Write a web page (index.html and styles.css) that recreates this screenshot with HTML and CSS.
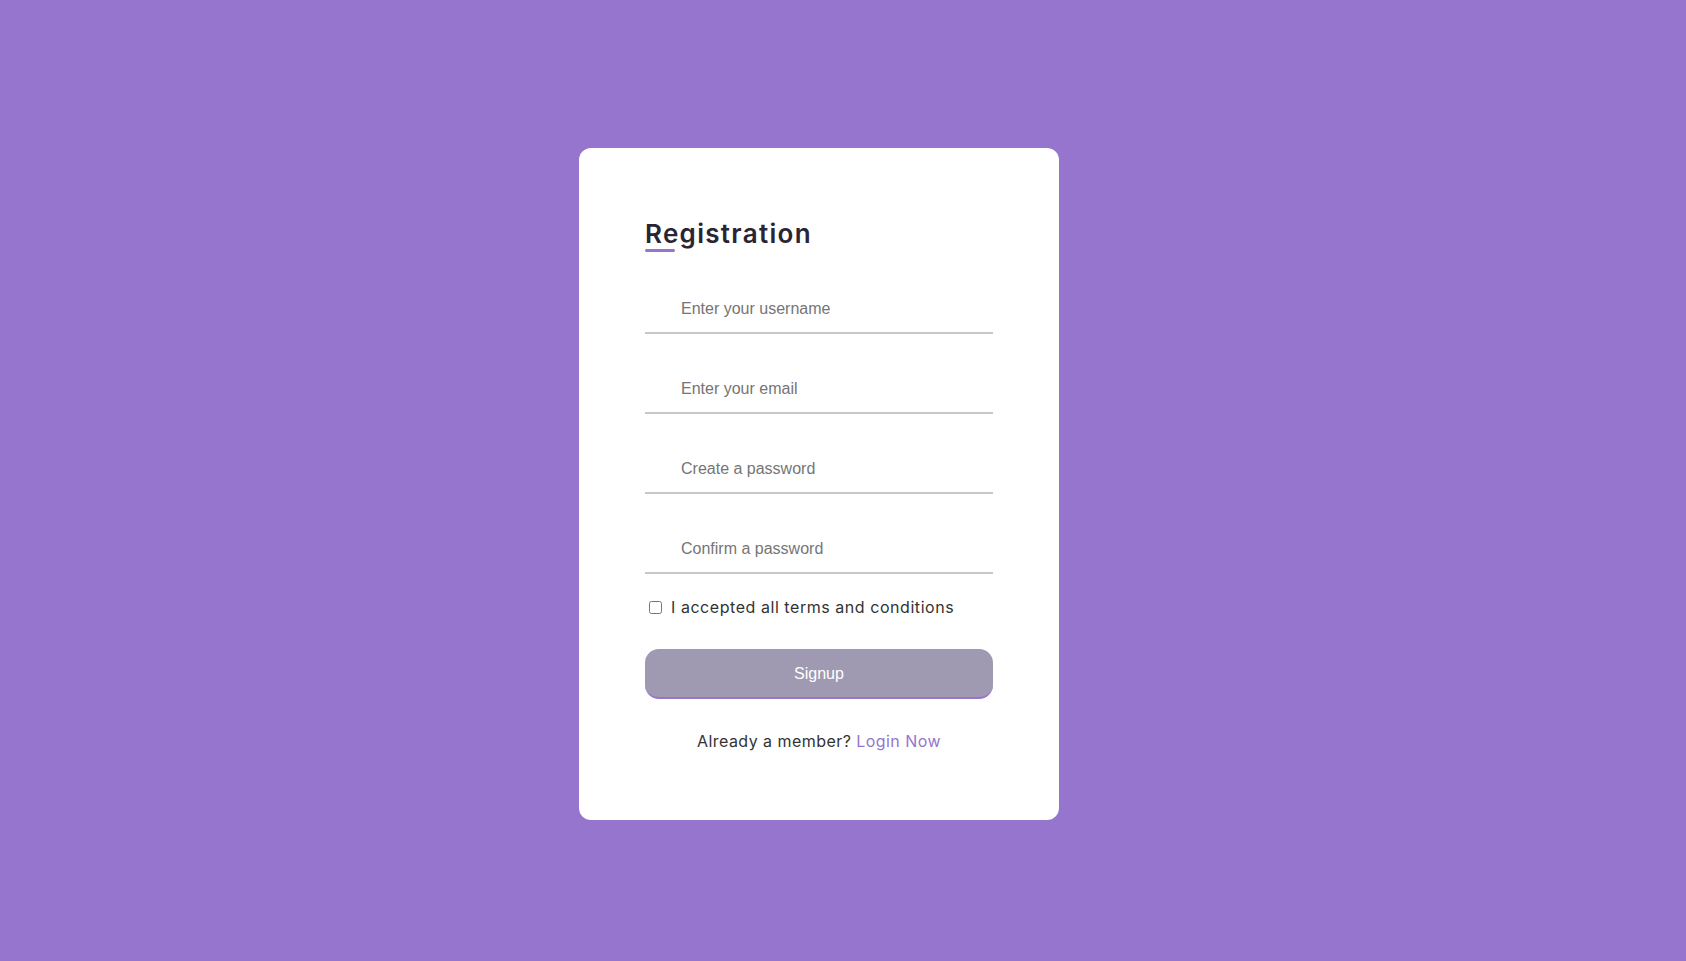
FILE: index.html
```html
<!DOCTYPE html>
<html lang="en">
<head>
<meta charset="utf-8">
<title>Registration</title>
<link rel="stylesheet" href="styles.css">
</head>
<body>
<div class="page">
  <div class="card">
    <h2 class="title">Registration</h2>
    <form class="form">
      <input class="field" type="text" placeholder="Enter your username">
      <input class="field" type="email" placeholder="Enter your email">
      <input class="field" type="password" placeholder="Create a password">
      <input class="field" type="password" placeholder="Confirm a password">
      <label class="terms"><input class="check" type="checkbox"><span>I accepted all terms and conditions</span></label>
      <button class="btn" type="button">Signup</button>
      <p class="login">Already a member? <a href="#" class="link">Login Now</a></p>
    </form>
  </div>
</div>
</body>
</html>
```
FILE: styles.css
```css
* { box-sizing: border-box; }
html, body { margin: 0; padding: 0; }
body {
  background: #9575cd;
  font-family: Inter, "Noto Sans", sans-serif;
  color: #333;
}
.page {
  min-height: 961px;
  display: flex;
  justify-content: center;
  padding: 148px 48px 0 0;
  align-items: flex-start;
}
.card {
  width: 480px;
  background: #fff;
  border-radius: 12px;
  padding: 68px 66px 67px;
}
.title {
  position: relative;
  margin: 0;
  font-size: 26px;
  line-height: 36px;
  font-weight: 600;
  letter-spacing: 1.3px;
  color: #2a2433;
}
.title::before {
  content: "";
  position: absolute;
  left: 0;
  bottom: 0;
  width: 30px;
  height: 3px;
  border-radius: 2px;
  background: #9575cd;
}
.form {
  display: flex;
  flex-direction: column;
  margin-top: 32px;
}
.field {
  height: 50px;
  border: none;
  border-bottom: 2px solid #c7c7c7;
  padding: 2px 36px 0;
  font-family: "Liberation Sans", Arial, sans-serif;
  font-size: 16px;
  outline: none;
  margin: 0 0 30px;
}
.field::placeholder { color: #757575; }
.field:last-of-type { margin-bottom: 0; }
.terms {
  display: flex;
  align-items: center;
  height: 24px;
  margin-top: 21px;
  font-size: 16px;
  letter-spacing: 0.55px;
  color: #333;
}
.check {
  width: 13px;
  height: 13px;
  margin: 0 0 0 4px;
}
.terms span { padding-left: 9px; }
.btn {
  margin-top: 30px;
  height: 50px;
  border: none;
  border-bottom: 2px solid #9575cd;
  border-radius: 14px;
  background: #9f99b1;
  color: #fff;
  padding-top: 2px;
  font-family: "Liberation Sans", Arial, sans-serif;
  font-size: 16px;
}
.login {
  margin: 30px 0 0;
  text-align: center;
  font-size: 16px;
  line-height: 24px;
  letter-spacing: 0.45px;
  color: #333;
}
.link { color: #9575cd; text-decoration: none; }
```
